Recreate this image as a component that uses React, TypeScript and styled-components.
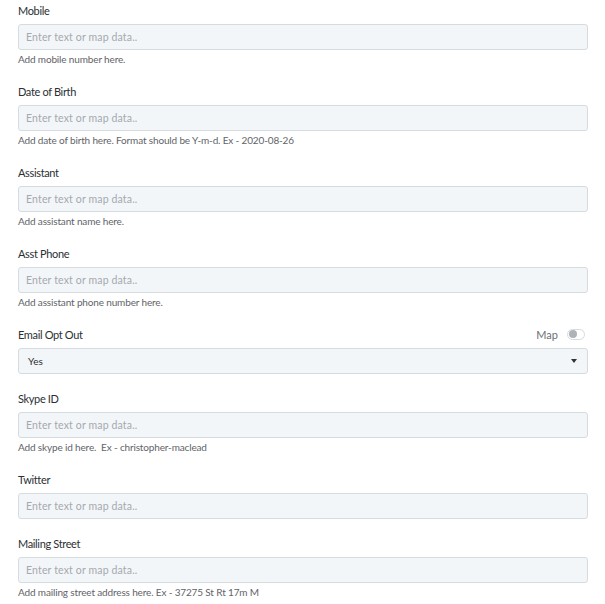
import styled, { createGlobalStyle } from "styled-components";

type FieldProps = {
  label: string;
  help?: string;
};

const fields: FieldProps[] = [
  { label: "Mobile", help: "Add mobile number here." },
  {
    label: "Date of Birth",
    help: "Add date of birth here. Format should be Y-m-d. Ex - 2020-08-26",
  },
  { label: "Assistant", help: "Add assistant name here." },
  { label: "Asst Phone", help: "Add assistant phone number here." },
];

const lowerFields: FieldProps[] = [
  { label: "Skype ID", help: "Add skype id here.\u00a0 Ex - christopher-maclead" },
  { label: "Twitter" },
  {
    label: "Mailing Street",
    help: "Add mailing street address here. Ex - 37275 St Rt 17m M",
  },
];

export default function App() {
  return (
    <>
      <GlobalStyle />
      <Form>
        {fields.map((f) => (
          <TextField key={f.label} {...f} />
        ))}
        <Field>
          <LabelRow>
            <Label>Email Opt Out</Label>
            <MapToggle>
              <span>Map</span>
              <Switch>
                <Knob />
              </Switch>
            </MapToggle>
          </LabelRow>
          <Select>
            <span>Yes</span>
            <Caret />
          </Select>
        </Field>
        {lowerFields.map((f) => (
          <TextField key={f.label} {...f} />
        ))}
      </Form>
    </>
  );
}

function TextField(props: FieldProps) {
  return (
    <Field>
      <LabelRow>
        <Label>{props.label}</Label>
      </LabelRow>
      <Input placeholder="Enter text or map data.." readOnly />
      {!!props.help && <Help>{props.help}</Help>}
    </Field>
  );
}

const GlobalStyle = createGlobalStyle`
  body {
    margin: 0;
    background: #fff;
    font-family: Lato, "Liberation Sans", sans-serif;
  }
  * {
    box-sizing: border-box;
  }
`;

const Form = styled.div`
  width: 588px;
  padding: 2px 0 0 18px;
  display: flex;
  flex-direction: column;
  gap: 16px;
`;

const Field = styled.div`
  display: flex;
  flex-direction: column;
`;

const LabelRow = styled.div`
  height: 16px;
  margin-bottom: 6px;
  display: flex;
  align-items: center;
  justify-content: space-between;
`;

const Label = styled.label`
  font-size: 11px;
  letter-spacing: -0.35px;
  color: #2b2f33;
`;

const Input = styled.input`
  width: 100%;
  height: 26px;
  padding: 0 7px;
  border: 1px solid #d6dbe0;
  border-radius: 3px;
  background: #f3f6f9;
  font-family: inherit;
  font-size: 10.5px;
  letter-spacing: 0.15px;
  outline: none;
  &::placeholder {
    color: #a4a9ae;
  }
`;

const Help = styled.div`
  margin-top: 2px;
  height: 15px;
  line-height: 15px;
  font-size: 10px;
  letter-spacing: -0.15px;
  color: #5f6468;
`;

const Select = styled.div`
  width: 100%;
  height: 26px;
  padding: 0 10px 0 9px;
  border: 1px solid #d6dbe0;
  border-radius: 3px;
  background: #f3f6f9;
  display: flex;
  align-items: center;
  justify-content: space-between;
  font-size: 10px;
  color: #2b2f33;
`;

const Caret = styled.i`
  width: 0;
  height: 0;
  border-left: 3.5px solid transparent;
  border-right: 3.5px solid transparent;
  border-top: 4px solid #333;
`;

const MapToggle = styled.div`
  display: flex;
  align-items: center;
  gap: 9px;
  margin-right: 3px;
  font-size: 11px;
  color: #6b7075;
`;

const Switch = styled.div`
  width: 18px;
  height: 11px;
  border: 1px solid #d7dbdf;
  border-radius: 6px;
  background: #fff;
  display: flex;
  align-items: center;
  padding: 0 1px;
`;

const Knob = styled.div`
  width: 8px;
  height: 8px;
  border-radius: 50%;
  background: #aeb3b8;
`;
